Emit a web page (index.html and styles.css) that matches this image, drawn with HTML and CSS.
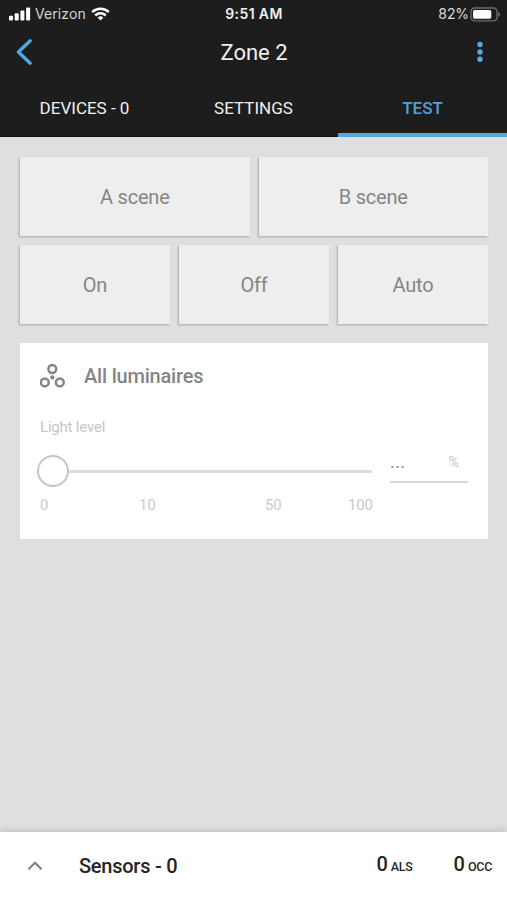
FILE: index.html
```html
<!DOCTYPE html>
<html lang="en">
<head>
<meta charset="utf-8">
<title>Zone 2</title>
<link rel="stylesheet" href="styles.css">
</head>
<body>
<div class="app">
  <header class="header">
    <div class="status">
      <div class="status-left">
        <svg class="signal" width="22" height="14" viewBox="0 0 22 14" fill="#fff"><rect x="0" y="8.8" width="4" height="4.7" rx="1"/><rect x="5.7" y="6.2" width="4" height="7.3" rx="1"/><rect x="11.4" y="3.4" width="4" height="10.1" rx="1"/><rect x="17.1" y="0.6" width="4" height="12.9" rx="1"/></svg>
        <span class="carrier">Verizon</span>
        <svg class="wifi" width="19" height="14" viewBox="0 0 19 14" fill="none" stroke="#fff" stroke-width="2.5"><path d="M1.2 5.2a11.8 11.8 0 0 1 16.6 0M4.3 8.5a7.4 7.4 0 0 1 10.4 0"/><path d="M9.5 13.6 6.7 10.7a4 4 0 0 1 5.6 0z" fill="#fff" stroke="none"/></svg>
      </div>
      <span class="clock">9:51 AM</span>
      <div class="status-right">
        <span class="percent">82%</span>
        <svg width="31" height="15" viewBox="0 0 31 15"><rect x="1" y="1" width="26" height="12.8" rx="3.6" fill="none" stroke="#6c6c6c" stroke-width="1.3"/><rect x="3" y="3" width="18.3" height="8.8" rx="1.8" fill="#fff"/><path d="M28.3 5v4.8q1.7-.7 1.7-2.4t-1.7-2.4z" fill="#777"/></svg>
      </div>
    </div>
    <div class="nav">
      <svg width="18" height="28" viewBox="0 0 18 28" fill="none" stroke="#4fa8df" stroke-width="3.4" stroke-linecap="round" stroke-linejoin="round"><path d="M15.2 2.7 3.4 14l11.8 11.2"/></svg>
      <h1 class="title">Zone 2</h1>
      <svg width="6" height="22" viewBox="0 0 6 22" fill="#55ade0"><circle cx="3" cy="3.5" r="2.7"/><circle cx="3" cy="11" r="2.7"/><circle cx="3" cy="18.3" r="2.7"/></svg>
    </div>
    <nav class="tabs">
      <span class="tab">DEVICES - 0</span>
      <span class="tab">SETTINGS</span>
      <span class="tab active">TEST</span>
    </nav>
  </header>
  <main class="content">
    <div class="row">
      <button class="scene">A scene</button>
      <button class="scene">B scene</button>
    </div>
    <div class="row">
      <button class="scene">On</button>
      <button class="scene">Off</button>
      <button class="scene">Auto</button>
    </div>
    <section class="card">
      <div class="card-head">
        <svg width="26" height="26" viewBox="0 0 26 26" fill="none" stroke="#858585" stroke-width="2.5"><circle cx="12.3" cy="6" r="3.9"/><circle cx="4.8" cy="19.4" r="3.9"/><circle cx="19.8" cy="19.4" r="3.9"/><circle cx="12.3" cy="14.4" r="2.1" fill="#858585" stroke="none"/></svg>
        <h2 class="card-title">All luminaires</h2>
      </div>
      <div class="label">Light level</div>
      <div class="controls">
        <div class="slider">
          <span class="thumb"></span>
          <span class="track"></span>
        </div>
        <div class="field"><span class="value">...</span><span class="unit">%</span></div>
      </div>
      <div class="ticks"><span>0</span><span>10</span><span>50</span><span>100</span></div>
    </section>
  </main>
  <footer class="footer">
    <svg width="16" height="12" viewBox="0 0 16 12" fill="none" stroke="#808080" stroke-width="2.2"><path d="M1.5 9.2 8 2.7l6.5 6.5"/></svg>
    <span class="sensors">Sensors - 0</span>
    <span class="count als"><b>0</b><small>ALS</small></span>
    <span class="count occ"><b>0</b><small>OCC</small></span>
  </footer>
</div>
</body>
</html>
```
FILE: styles.css
```css
* { box-sizing: border-box; }
body { margin: 0; font-family: Roboto, "Liberation Sans", sans-serif; }
h1, h2 { margin: 0; }
svg { display: block; flex: none; }
.app { width: 507px; height: 900px; display: flex; flex-direction: column; background: #dfdfe1; overflow: hidden; }
.header { height: 137px; background: #1d1d1d; color: #f0f0f0; display: flex; flex-direction: column; }
.status { height: 28px; display: grid; grid-template-columns: 1fr auto 1fr; align-items: center; padding: 0 6px 0 9px; font-family: Inter, sans-serif; font-size: 14px; line-height: 20px; }
.status-left, .status-right { display: flex; align-items: center; }
.status-right { justify-content: flex-end; gap: 1px; }
.carrier { margin: 0 5px 0 4px; color: #d4d4d4; letter-spacing: .08px; }
.clock { font-weight: 600; letter-spacing: .4px; margin-right: 2px; }
.percent { color: #dcdcdc; letter-spacing: -.1px; }
.nav { height: 50px; display: flex; justify-content: space-between; align-items: center; padding: 0 24px 2px 15px; }
.title { font-size: 22px; font-weight: 400; margin-right: 2px; }
.tabs { height: 59px; display: grid; grid-template-columns: repeat(3, 1fr); }
.tab { text-align: center; font-size: 17px; line-height: 61px; height: 59px; border-bottom: 1px solid #101010; }
.active { color: #4fa3d9; font-weight: 500; border-bottom: 4px solid #4fa8df; }
.content { flex: 1; padding: 20px 19px 0 20px; display: flex; flex-direction: column; }
.row { display: flex; gap: 9px; margin-bottom: 9px; }
.scene { flex: 1; height: 79px; border: 0; padding: 0; background: #eee; color: #858585; font: 400 20px Roboto, sans-serif; letter-spacing: -.2px; box-shadow: -1px 1px 2px rgba(0,0,0,.25); }
.card { margin-top: 10px; height: 196px; background: #fff; padding: 20px 20px 0; }
.card-head { display: flex; align-items: center; gap: 18px; height: 26px; }
.card-title { font-size: 20px; font-weight: 500; letter-spacing: -.2px; color: #858585; }
.label { margin-top: 29px; font-size: 15px; line-height: 18px; letter-spacing: -.2px; color: #c6c6c6; }
.controls { display: flex; gap: 18px; height: 60px; align-items: flex-start; }
.slider { display: flex; align-items: center; width: 335px; height: 32px; margin: 19px 0 0 -3px; }
.thumb { width: 32px; height: 32px; border: 2px solid #c4c4c4; border-radius: 50%; }
.track { flex: 1; height: 3px; background: #dcdcdc; }
.field { width: 78px; height: 47px; border-bottom: 2px solid #d8d8d8; display: flex; justify-content: space-between; padding: 0 9px 0 0; }
.value { color: #858585; font-size: 18px; line-height: 52px; letter-spacing: .4px; }
.unit { color: #c6c6c6; font-size: 14px; line-height: 52px; }
.ticks { display: grid; grid-template-columns: 99px 126px 83px auto; font-size: 15px; line-height: 18px; letter-spacing: -.2px; color: #cacaca; }
.footer { height: 68px; background: #fff; display: flex; align-items: center; padding: 0 15px 0 27px; box-shadow: 0 -2px 7px rgba(0,0,0,.13); color: #252525; }
.sensors { margin-left: 36px; font-size: 20px; font-weight: 500; letter-spacing: -.25px; }
.count { display: flex; align-items: baseline; gap: 3px; position: relative; top: -2px; }
.count b { font-size: 20px; font-weight: 500; }
.count small { font-size: 12.5px; font-weight: 500; letter-spacing: -.3px; }
.als { margin-left: auto; }
.occ { margin-left: 41px; }
```
